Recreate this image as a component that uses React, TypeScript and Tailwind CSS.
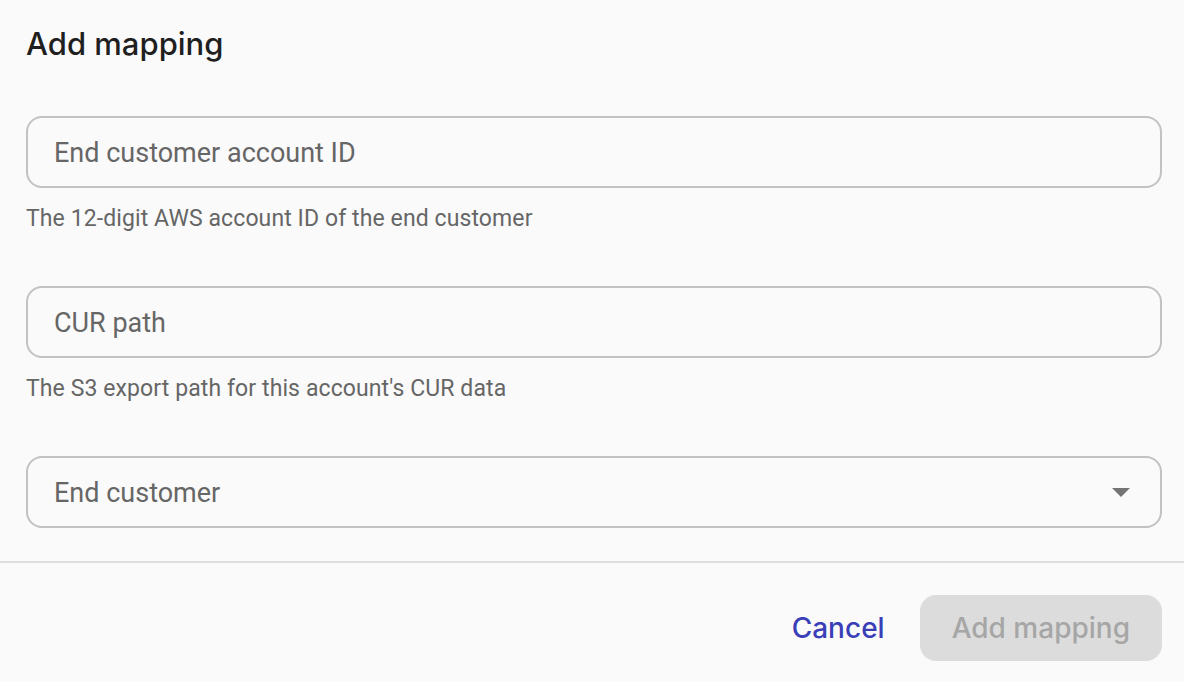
import React from 'react';

const ROBOTO = "font-['Roboto',_'Liberation_Sans',_sans-serif]";

function Field({ label, helper, select }: { label: string; helper?: string; select?: boolean }) {
  return (
    <div className="flex flex-col">
      <div className="flex h-[72px] items-center justify-between rounded-[16px] border-2 border-[#c2c2c2] bg-[#fafafa] pl-[26px] pr-[30px]">
        <span className={`${ROBOTO} pt-[3px] text-[27px] text-[#666666]`}>{label}</span>
        {select && (
          <svg width="18" height="9" viewBox="0 0 18 9">
            <path d="M0 0 L18 0 L9 9 Z" fill="#757575" />
          </svg>
        )}
      </div>
      {helper && (
        <p className={`${ROBOTO} mt-[17px] text-[23px] leading-[28px] tracking-[0.1px] text-[#666666]`}>{helper}</p>
      )}
    </div>
  );
}

export default function App() {
  return (
    <div className="flex h-[682px] w-[1184px] flex-col bg-[#fafafa] font-['Inter',_sans-serif]">
      <div className="pl-[26px] pr-[22px] pt-[26px]">
        <h1 className="text-[31px] leading-[36px] font-medium text-[#1f1f1f]">Add mapping</h1>
        <div className="mt-[54px] flex flex-col gap-[53px]">
          <Field label="End customer account ID" helper="The 12-digit AWS account ID of the end customer" />
          <Field label="CUR path" helper="The S3 export path for this account's CUR data" />
          <Field label="End customer" select />
        </div>
      </div>
      <div className="mt-[33px] h-[2px] bg-[#dedede]" />
      <div className="flex items-center justify-end gap-[35px] pr-[22px] pt-[32px]">
        <button className="text-[28px] font-medium text-[#3a3fb8]">Cancel</button>
        <button
          disabled
          className="h-[66px] rounded-[16px] bg-[#dcdcdc] px-[32px] text-[28px] font-medium text-[#a6a6a6]"
        >
          Add mapping
        </button>
      </div>
    </div>
  );
}
